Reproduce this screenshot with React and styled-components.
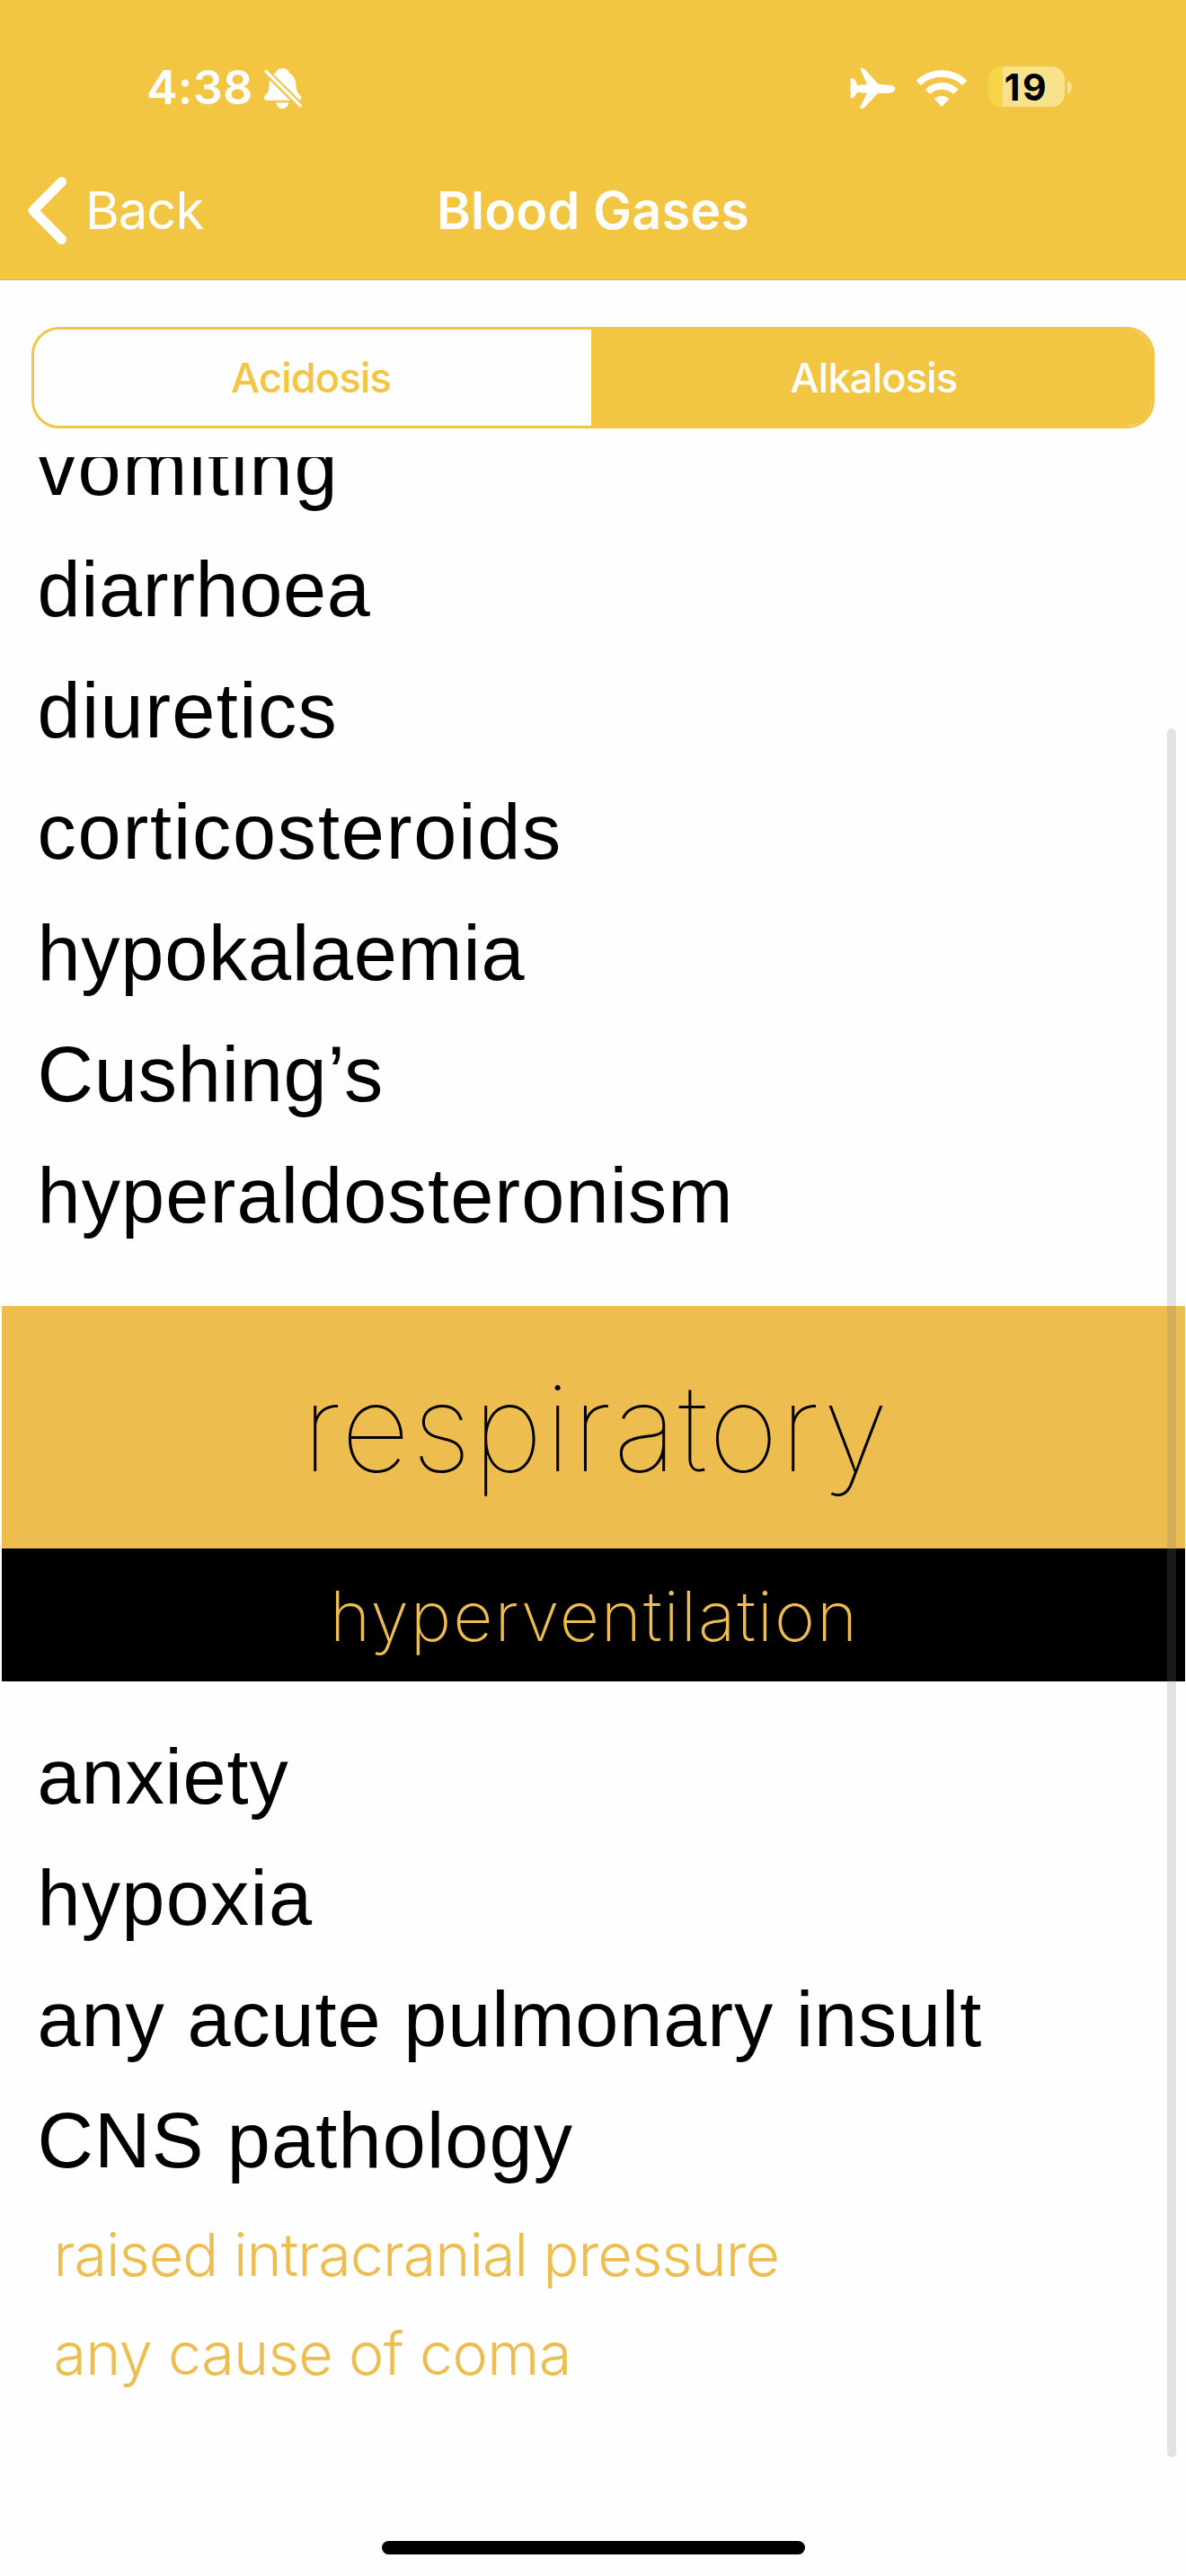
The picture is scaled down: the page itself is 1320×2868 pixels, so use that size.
import React, { useState } from "react";
import styled, { createGlobalStyle } from "styled-components";

const gold = "#f2c643";
const bandGold = "#edbd4f";
const paper = "#fefefe";

const GlobalStyle = createGlobalStyle`
  *, *::before, *::after { box-sizing: border-box; }
  body { margin: 0; background: ${paper}; }
`;

const Screen = styled.div`
  position: relative;
  display: flex;
  flex-direction: column;
  width: 1320px;
  height: 2868px;
  overflow: hidden;
  background: ${paper};
  font-family: Inter, "Liberation Sans", sans-serif;
  white-space: nowrap;
`;

const Header = styled.header`
  flex: none;
  height: 312px;
  background: ${gold};
  border-bottom: 1px solid #b3ada0;
  color: #fff;
`;

const StatusBar = styled.div`
  display: flex;
  align-items: center;
  justify-content: space-between;
  height: 195px;
  padding: 0 127px 0 163px;
`;

const StatusGroup = styled.div`
  display: flex;
  align-items: center;
`;

const Clock = styled.span`
  margin-right: 12px;
  font-size: 52px;
  font-weight: 600;
  line-height: 60px;
  letter-spacing: 0.23px;
`;

const StatusIcon = styled.svg`
  display: block;
  width: ${(p) => p.$w}px;
  height: ${(p) => p.$h}px;
  margin-right: ${(p) => p.$gap || 0}px;
  margin-top: ${(p) => p.$drop || 0}px;
  overflow: visible;
`;

const Battery = styled.div`
  display: flex;
  align-items: center;
  gap: 3px;
  margin-bottom: 2px;
`;

const BatteryCell = styled.div`
  display: flex;
  align-items: center;
  justify-content: center;
  width: 85px;
  height: 45px;
  padding-top: 1px;
  border-radius: 14.5px;
  background: linear-gradient(to right, #f6d648 16px, #f8e28b 16px);
  color: #000;
  font-size: 41px;
  font-weight: 700;
  line-height: 44px;
  letter-spacing: 2.6px;
`;

const BatteryTip = styled.div`
  width: 5px;
  height: 14px;
  border-radius: 0 5px 5px 0 / 0 7px 7px 0;
  background: #f8e28b;
`;

const NavBar = styled.nav`
  display: grid;
  grid-template-columns: 1fr auto 1fr;
  align-items: center;
  height: 78px;
  padding: 0 31px;
`;

const BackButton = styled.button`
  display: flex;
  align-items: center;
  gap: 21px;
  padding: 0;
  border: 0;
  background: none;
  color: inherit;
  font: 400 57.8px/76px Inter, sans-serif;
  letter-spacing: -0.96px;
`;

const Title = styled.h1`
  margin: 0;
  font-size: 57.5px;
  font-weight: 600;
  line-height: 76px;
  letter-spacing: 0.13px;
`;

const Segments = styled.div`
  flex: none;
  display: grid;
  grid-template-columns: 620px 1fr;
  height: 113px;
  margin: 52px 35px 32px;
  border: 3px solid ${gold};
  border-radius: 31px;
  overflow: hidden;
`;

const Segment = styled.button`
  padding: ${(p) => (p.$last ? "0 0 0 5px" : "0 4px 0 0")};
  border: 0;
  background: ${(p) => (p.$active ? gold : paper)};
  color: ${(p) => (p.$active ? "#fff" : gold)};
  font: 500 45.4px/107px Inter, sans-serif;
  letter-spacing: -0.9px;
`;

const Scroller = styled.main`
  position: relative;
  flex: 1;
  min-height: 0;
  overflow: hidden;
`;

const Content = styled.div`
  margin-top: -55px;
`;

const CauseList = styled.ul`
  margin: 0;
  padding: 0 0 0 41.5px;
  list-style: none;
`;

const Cause = styled.li`
  color: #000;
  font: 400 86.5px/135px "Liberation Sans", Arial, sans-serif;
  letter-spacing: ${(p) => p.$track}px;
`;

const SubList = styled.ul`
  margin: 4px 0 0;
  padding: 0 0 0 18px;
  list-style: none;
`;

const SubCause = styled.li`
  color: ${bandGold};
  font: 300 66.5px/110.3px Inter, sans-serif;
  letter-spacing: ${(p) => p.$track}px;
`;

const Section = styled.section`
  margin: 55px 1px 39px 2px;
`;

const SectionTitle = styled.h2`
  margin: 0;
  padding-left: 6px;
  height: 269.5px;
  background: ${bandGold};
  color: #000;
  text-align: center;
  font-size: 134px;
  font-weight: 100;
  line-height: 271px;
  letter-spacing: 2px;
`;

const SectionSubtitle = styled.h3`
  margin: 0;
  height: 148.5px;
  padding-left: 2px;
  background: #000;
  color: ${bandGold};
  text-align: center;
  font-size: 77px;
  font-weight: 200;
  line-height: 150px;
  letter-spacing: 1.89px;
`;

const ScrollThumb = styled.div`
  position: absolute;
  top: 302px;
  right: 11px;
  width: 10px;
  height: 1925px;
  border-radius: 5px;
  background: rgba(122, 122, 122, 0.204);
`;

const HomeIndicator = styled.div`
  position: absolute;
  left: 425px;
  bottom: 24px;
  width: 471px;
  height: 15px;
  border-radius: 8px;
  background: #000;
`;

const tabs = ["Acidosis", "Alkalosis"];

const metabolic = [
  ["vomiting", 1.7],
  ["diarrhoea", 0.6],
  ["diuretics", 1.4],
  ["corticosteroids", 1.8],
  ["hypokalaemia", 0.75],
  ["Cushing’s", 0.8],
  ["hyperaldosteronism", 1.13],
];

const respiratory = [
  ["anxiety", 0.85],
  ["hypoxia", 1.25],
  ["any acute pulmonary insult", 0.87],
  ["CNS pathology", 1.15],
];

const cnsCauses = [
  ["raised intracranial pressure", -1.02],
  ["any cause of coma", -0.68],
];

function BellOff() {
  return (
    <StatusIcon $w={42} $h={45.3} $drop={2} viewBox="881 77 126 136">
      <path
        fill="#fff"
        d="M942 77c-12 0-20 6-23 16-14 8-21 22-21 38 0 18-2 24-11 34-5 5-6 7-6 11 0 6 3 8 8 8h108c5 0 8-3 8-8 0-4-2-7-6-11-9-10-11-18-12-34-1-19-9-31-22-38-3-10-11-16-23-16z"
      />
      <path fill="#fff" d="M921 192h42c-2 12-10 20-21 20s-19-8-21-20z" />
      <path stroke={gold} strokeWidth="23" d="M878 79L1016 216" />
      <path stroke="#fff" strokeWidth="10" strokeLinecap="round" d="M887 87L1002 202" />
    </StatusIcon>
  );
}

function Airplane() {
  return (
    <StatusIcon $w={49} $h={44} $gap={23.7} $drop={1} viewBox="141 78 147 132">
      <path
        fill="#fff"
        d="M233 131L190 84q-5-6-10-6h-5q-4 0-2 4l22 49-32 4-8-18q-3-6-8-6h-6q-1 0-1 1v65q0 1 1 1h4q4 0 7-5l11-15 32 3-23 46q-2 6 2 6h6q4 0 8-5l43-47h38c10 0 20-6 20-14s-10-13-20-13z"
      />
    </StatusIcon>
  );
}

function Wifi() {
  return (
    <StatusIcon $w={58} $h={42} $gap={22.6} viewBox="359 76 172 126">
      <g fill="#fff" stroke="#fff" strokeWidth="3" strokeLinejoin="round">
        <path d="M361 114.500A121.500 121.500 0 0 1 529 114.500L514 128A101 101 0 0 0 376 128Z" />
        <path d="M391.500 143.500A80 80 0 0 1 499.500 143.500L484.500 157.500A59 59 0 0 0 405.500 157.500Z" />
        <path d="M422 175A38 38 0 0 1 469 175L445.500 200Z" />
      </g>
    </StatusIcon>
  );
}

function Chevron() {
  return (
    <StatusIcon $w={43} $h={75} viewBox="0 0 43 75" fill="none">
      <path
        d="M37.500 5.500L6 37.300L37.500 69.500"
        stroke="#fff"
        strokeWidth="11"
        strokeLinecap="round"
        strokeLinejoin="round"
      />
    </StatusIcon>
  );
}

export default function App() {
  const [tab, setTab] = useState("Alkalosis");
  return (
    <Screen>
      <GlobalStyle />
      <Header>
        <StatusBar>
          <StatusGroup>
            <Clock>4:38</Clock>
            <BellOff />
          </StatusGroup>
          <StatusGroup>
            <Airplane />
            <Wifi />
            <Battery>
              <BatteryCell>19</BatteryCell>
              <BatteryTip />
            </Battery>
          </StatusGroup>
        </StatusBar>
        <NavBar>
          <BackButton>
            <Chevron />
            Back
          </BackButton>
          <Title>Blood Gases</Title>
        </NavBar>
      </Header>
      <Segments>
        {tabs.map((name, i) => (
          <Segment
            key={name}
            $active={tab === name}
            $last={i === tabs.length - 1}
            onClick={() => setTab(name)}
          >
            {name}
          </Segment>
        ))}
      </Segments>
      <Scroller>
        <Content>
          <CauseList>
            {metabolic.map(([name, track]) => (
              <Cause key={name} $track={track}>{name}</Cause>
            ))}
          </CauseList>
          <Section>
            <SectionTitle>respiratory</SectionTitle>
            <SectionSubtitle>hyperventilation</SectionSubtitle>
          </Section>
          <CauseList>
            {respiratory.map(([name, track]) => (
              <Cause key={name} $track={track}>{name}</Cause>
            ))}
            <SubList>
              {cnsCauses.map(([name, track]) => (
                <SubCause key={name} $track={track}>{name}</SubCause>
              ))}
            </SubList>
          </CauseList>
        </Content>
        <ScrollThumb />
      </Scroller>
      <HomeIndicator />
    </Screen>
  );
}
